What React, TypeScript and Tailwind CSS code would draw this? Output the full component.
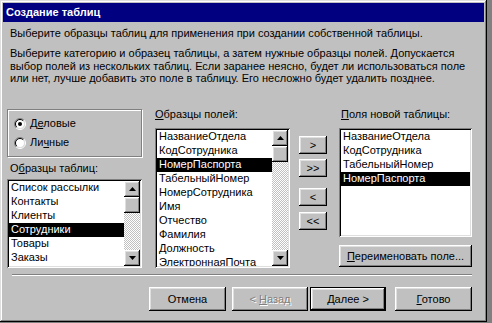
import React from 'react';

const raised =
  'bg-[#c0c0c0] shadow-[inset_-1px_-1px_#000,inset_1px_1px_#fff,inset_-2px_-2px_#808080,inset_2px_2px_#dfdfdf]';
const sunken =
  'bg-white shadow-[inset_1px_1px_#808080,inset_-1px_-1px_#fff,inset_2px_2px_#000,inset_-2px_-2px_#dfdfdf]';

function Key({ children }: { children: React.ReactNode }) {
  return <span className="underline underline-offset-[1px]">{children}</span>;
}

function Radio({ checked }: { checked?: boolean }) {
  return (
    <svg width="12" height="12" viewBox="0 0 12 12" className="shrink-0">
      <circle cx="6" cy="6" r="4.5" fill="#fff" />
      <path d="M2.1 9.9 A5.5 5.5 0 0 1 9.9 2.1" stroke="#808080" fill="none" />
      <path d="M9.9 2.1 A5.5 5.5 0 0 1 2.1 9.9" stroke="#fff" fill="none" />
      <path d="M2.8 9.2 A4.5 4.5 0 0 1 9.2 2.8" stroke="#000" fill="none" />
      <path d="M9.2 2.8 A4.5 4.5 0 0 1 2.8 9.2" stroke="#dfdfdf" fill="none" />
      {checked && <circle cx="6" cy="6" r="2" fill="#000" />}
    </svg>
  );
}

function Arrow({ down }: { down?: boolean }) {
  return (
    <svg width="7" height="4" viewBox="0 0 7 4">
      <polygon points={down ? '0,0 7,0 3.5,4' : '0,4 7,4 3.5,0'} fill="#000" />
    </svg>
  );
}

function ScrollBar() {
  return (
    <div className="w-[16px] flex flex-col shrink-0">
      <div className={`${raised} h-[16px] flex items-center justify-center`}>
        <Arrow />
      </div>
      <div className="flex-1 flex flex-col bg-[image:repeating-conic-gradient(#c0c0c0_0%_25%,#ffffff_0%_50%)] bg-[length:2px_2px]">
        <div className={`${raised} h-[16px]`} />
      </div>
      <div className={`${raised} h-[16px] flex items-center justify-center`}>
        <Arrow down />
      </div>
    </div>
  );
}

function ListBox({
  items,
  selected,
  scroll,
  className,
}: {
  items: string[];
  selected: number;
  scroll?: boolean;
  className: string;
}) {
  return (
    <div className={`${sunken} ${className} p-[2px] flex`}>
      <div className="flex-1 overflow-hidden flex flex-col">
        {items.map((item, i) => (
          <div
            key={item}
            className={`h-[14px] shrink-0 leading-[12px] pl-[2px] whitespace-nowrap ${
              i === selected ? 'bg-black text-white' : 'text-black'
            }`}
          >
            {item}
          </div>
        ))}
      </div>
      {scroll && <ScrollBar />}
    </div>
  );
}

function Button({
  children,
  className = '',
  def,
  disabled,
}: {
  children: React.ReactNode;
  className?: string;
  def?: boolean;
  disabled?: boolean;
}) {
  return (
    <div
      className={`${raised} ${def ? 'border border-black' : ''} ${
        disabled ? 'text-[#808080] [text-shadow:1px_1px_0_#fff]' : 'text-black'
      } flex items-center justify-center whitespace-nowrap shrink-0 ${className}`}
    >
      {children}
    </div>
  );
}

const tables = ['Список рассылки', 'Контакты', 'Клиенты', 'Сотрудники', 'Товары', 'Заказы'];
const fields = [
  'НазваниеОтдела',
  'КодСотрудника',
  'НомерПаспорта',
  'ТабельныйНомер',
  'НомерСотрудника',
  'Имя',
  'Отчество',
  'Фамилия',
  'Должность',
  'ЭлектроннаяПочта',
];
const newFields = ['НазваниеОтдела', 'КодСотрудника', 'ТабельныйНомер', 'НомерПаспорта'];

export default function App() {
  return (
    <div className="w-[492px] h-[323px] bg-[#808080] font-['Liberation_Sans',Arial,sans-serif] text-[11px] text-black">
      <div className="w-[487px] h-[322px] bg-[#c0c0c0] p-[3px] flex flex-col shadow-[inset_-1px_-1px_#000,inset_1px_1px_#dfdfdf,inset_-2px_-2px_#808080,inset_2px_2px_#fff]">
        {/* title bar */}
        <div className="h-[19px] shrink-0 bg-[#000080] text-white font-bold pl-[3px] flex items-center">
          Создание таблиц
        </div>

        <div className="flex flex-col pl-[4px] pr-[12px]">
          <p className="mt-[5px] pl-[3px] leading-[13px] whitespace-nowrap">
            Выберите образцы таблиц для применения при создании собственной таблицы.
          </p>
          <p className="mt-[7px] h-[38px] pl-[3px] leading-[12.5px] whitespace-nowrap">
            Выберите категорию и образец таблицы, а затем нужные образцы полей. Допускается
            <br />
            выбор полей из нескольких таблиц. Если заранее неясно, будет ли использоваться поле
            <br />
            или нет, лучше добавить это поле в таблицу. Его несложно будет удалить позднее.
          </p>

          <div className="mt-[23px] flex">
            {/* left column */}
            <div className="w-[135px] flex flex-col">
              <div className="mt-[1px] h-[48px] border border-[#808080] shadow-[inset_1px_1px_#fff,1px_1px_#fff] flex flex-col pl-[6px] pt-[7px] gap-[6px]">
                <div className="h-[13px] flex items-center gap-[4px]">
                  <Radio checked />
                  <span>
                    Д<Key>е</Key>ловые
                  </span>
                </div>
                <div className="h-[13px] flex items-center gap-[4px]">
                  <Radio />
                  <span>
                    Ли<Key>ч</Key>ные
                  </span>
                </div>
              </div>
              <div className="mt-[5px] h-[13px] leading-[13px] pl-[3px]">
                О<Key>б</Key>разцы таблиц:
              </div>
              <ListBox items={tables} selected={3} scroll className="mt-[4px] h-[89px]" />
            </div>

            {/* middle column */}
            <div className="ml-[13px] w-[135px] flex flex-col">
              <div className="h-[13px] leading-[13px]">
                <Key>О</Key>бразцы полей:
              </div>
              <ListBox items={fields} selected={2} scroll className="mt-[7px] h-[140px]" />
            </div>

            {/* move buttons */}
            <div className="ml-[9px] w-[28px] flex flex-col pt-[28px]">
              <Button className="h-[18px]">&gt;</Button>
              <Button className="h-[18px] mt-[5px]">&gt;&gt;</Button>
              <Button className="h-[18px] mt-[11px]">&lt;</Button>
              <Button className="h-[18px] mt-[6px]">&lt;&lt;</Button>
            </div>

            {/* right column */}
            <div className="ml-[12px] w-[133px] flex flex-col">
              <div className="h-[13px] leading-[13px] pl-[2px]">
                <Key>П</Key>оля новой таблицы:
              </div>
              <ListBox items={newFields} selected={3} className="mt-[7px] h-[109px]" />
              <Button className="mt-[8px] h-[22px]">
                <span>
                  <Key>П</Key>ереименовать поле...
                </span>
              </Button>
            </div>
          </div>

          {/* separator */}
          <div className="mt-[6px] ml-[5px] h-[2px] border-t border-[#808080] border-b border-b-white" />

          {/* wizard buttons */}
          <div className="mt-[11px] flex justify-end">
            <Button className="w-[77px] h-[24px]">Отмена</Button>
            <Button className="ml-[6px] w-[76px] h-[24px]" disabled>
              <span>
                &lt; <Key>Н</Key>азад
              </span>
            </Button>
            <Button className="ml-[2px] w-[76px] h-[24px]" def>
              <span>
                <Key>Д</Key>алее &gt;
              </span>
            </Button>
            <Button className="ml-[9px] w-[77px] h-[24px]">
              <span>
                <Key>Г</Key>отово
              </span>
            </Button>
          </div>
        </div>
      </div>
    </div>
  );
}
